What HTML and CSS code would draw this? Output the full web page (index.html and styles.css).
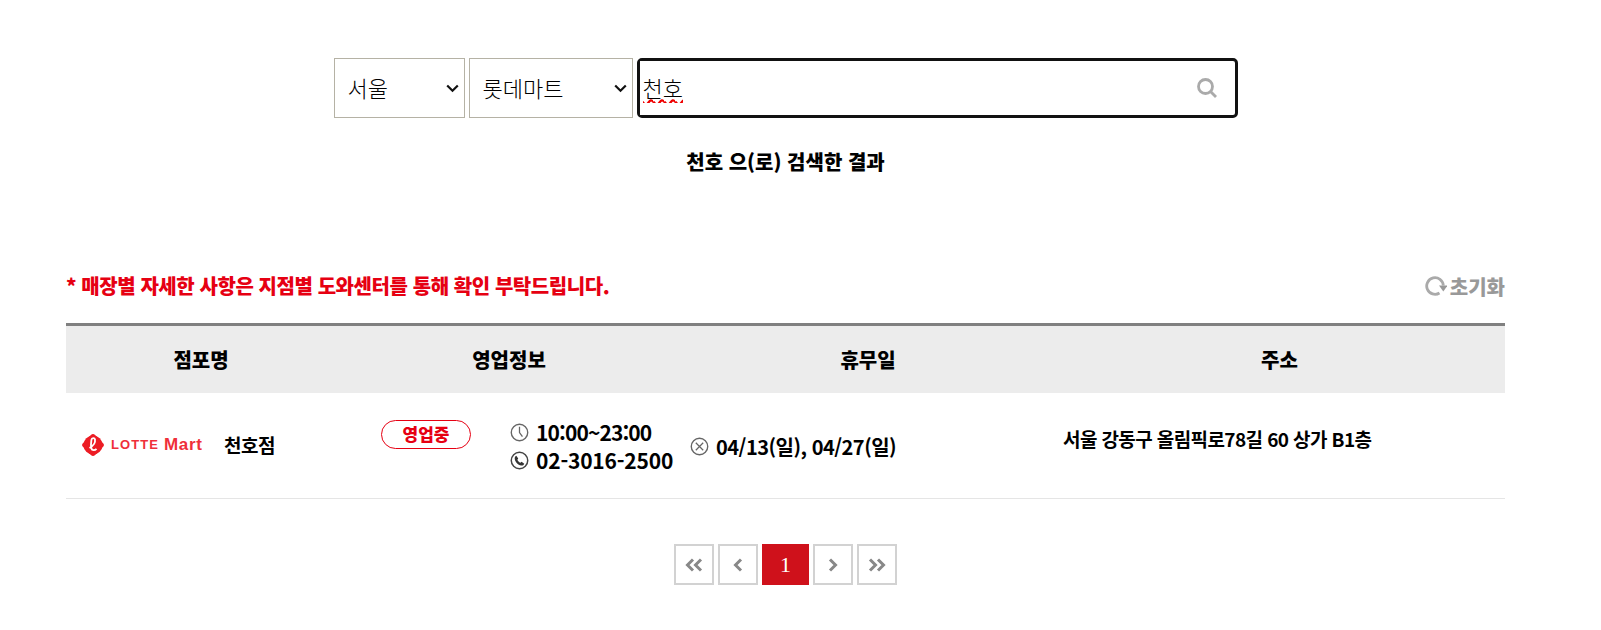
FILE: index.html
```html
<!DOCTYPE html>
<html lang="ko">
<head>
    <meta charset="UTF-8">
    <meta name="viewport" content="width=device-width, initial-scale=1.0">
    <title>매장찾기</title>
    <link rel="stylesheet" href="styles.css">
</head>
<body>
    <div class="page-wrap">
        <div class="search-bar">
            <div class="select-wrap city">
                <select class="search-select">
                    <option>서울</option>
                </select>
                <svg class="select-arrow" viewBox="0 0 13 9"><path d="M1.200 1.500 6.500 6.800l5.300-5.300" fill="none" stroke="#111" stroke-width="2.200"/></svg>
            </div>
            <div class="select-wrap brand">
                <select class="search-select">
                    <option>롯데마트</option>
                </select>
                <svg class="select-arrow" viewBox="0 0 13 9"><path d="M1.200 1.500 6.500 6.800l5.300-5.300" fill="none" stroke="#111" stroke-width="2.200"/></svg>
            </div>
            <div class="search-box">
                <input class="search-input" type="text" value="천호">
                <svg class="search-icon" viewBox="0 0 20 20"><circle cx="8.500" cy="8.500" r="7" fill="none" stroke="#aaa" stroke-width="2.800"/><path d="m13.500 13.500 5.500 5.500" stroke="#aaa" stroke-width="2.800"/></svg>
            </div>
        </div>
        <p class="search-result">천호 으(로) 검색한 결과</p>

        <div class="store-top">
            <p class="store-notice">* 매장별 자세한 사항은 지점별 도와센터를 통해 확인 부탁드립니다.</p>
            <div class="reset-btn">
                <svg class="reset-icon" viewBox="0 0 22 20"><path d="M14.500 17A8.300 8.300 0 1 1 18.300 9.500" fill="none" stroke="#aaa" stroke-width="2.800"/><path d="M14 9.500h8.500l-4.200 6z" fill="#999"/></svg>
                <span>초기화</span>
            </div>
        </div>

        <div class="store-table">
            <div class="store-head">
                <div>점포명</div>
                <div>영업정보</div>
                <div>휴무일</div>
                <div>주소</div>
            </div>
            <div class="store-row">
                <div class="cell-name">
                    <div class="logo">
                        <svg class="logo-mark" viewBox="0 0 24 24">
                            <circle cx="12" cy="12" r="9.500" fill="#ec1c24"/>
                            <rect x="3.500" y="3.500" width="17" height="17" rx="3" transform="rotate(45 12 12)" fill="#ec1c24"/>
                            <path d="M8.500 15c3.500-2 6-5.500 5.500-8.500-.4-2-3.200-2-3.600.5-.5 3-.6 6 0 8.500.5 2 3.600 2 5.100.3" fill="none" stroke="#fff" stroke-width="1.800"/>
                        </svg>
                        <span class="logo-lotte">LOTTE</span>
                        <span class="logo-mart">Mart</span>
                    </div>
                    <span class="store-name">천호점</span>
                </div>
                <div class="cell-info">
                    <span class="status">영업중</span>
                    <ul class="info-list">
                        <li class="info-time">
                            <svg class="info-icon" viewBox="0 0 18 18"><circle cx="9" cy="9" r="7.800" fill="none" stroke="#666" stroke-width="1.300"/><path d="M9 3.500V9l2.800 4" fill="none" stroke="#666" stroke-width="1.200"/></svg>
                            10:00~23:00
                        </li>
                        <li class="info-tel">
                            <svg class="info-icon" viewBox="0 0 18 18"><circle cx="9" cy="9" r="7.800" fill="none" stroke="#444" stroke-width="1.400"/><path d="M6 4.500 7.800 7 7 8.300c.6 1.200 1.500 2.200 2.800 2.800l1.200-.9 2.500 1.800c-.5 1.400-1.800 2-3 1.700C7.500 13 5 10.500 4.500 7.500 4.300 6.200 4.800 5 6 4.500z" fill="#333"/></svg>
                            02-3016-2500
                        </li>
                    </ul>
                </div>
                <div class="cell-holiday">
                    <svg class="info-icon" viewBox="0 0 18 18"><circle cx="9" cy="9" r="7.800" fill="none" stroke="#666" stroke-width="1.300"/><path d="m5.500 5.500 7 7m0-7-7 7" fill="none" stroke="#666" stroke-width="1.200"/></svg>
                    04/13(일), 04/27(일)
                </div>
                <div class="cell-addr">서울 강동구 올림픽로78길 60 상가 B1층</div>
            </div>
        </div>

        <div class="paging">
            <a class="page-btn"><svg viewBox="0 0 20 14"><path d="M9 1.500 3.500 7 9 12.500M17 1.500 11.500 7l5.500 5.500" fill="none" stroke="#888" stroke-width="3"/></svg></a>
            <a class="page-btn"><svg viewBox="0 0 20 14"><path d="M13 1.500 7.500 7l5.500 5.500" fill="none" stroke="#888" stroke-width="3"/></svg></a>
            <a class="page-btn current">1</a>
            <a class="page-btn"><svg viewBox="0 0 20 14"><path d="M7 1.500 12.500 7 7 12.500" fill="none" stroke="#888" stroke-width="3"/></svg></a>
            <a class="page-btn"><svg viewBox="0 0 20 14"><path d="M3 1.500 8.500 7 3 12.500M11 1.500 16.500 7 11 12.500" fill="none" stroke="#888" stroke-width="3"/></svg></a>
        </div>
    </div>
</body>
</html>
```

FILE: styles.css
```css
* {
    box-sizing: border-box;
}

body {
    margin: 0;
    background: #fff;
    color: #000;
    font-family: "Noto Sans CJK KR", "Noto Sans", sans-serif;
}

p {
    margin: 0;
}

.page-wrap {
    margin: 0 96px 0 66px;
}

.search-bar {
    display: flex;
    justify-content: center;
    gap: 4px;
    padding-top: 58px;
}

.select-wrap {
    position: relative;
    height: 60px;
}

.select-wrap.city {
    width: 131px;
}

.select-wrap.brand {
    width: 164px;
}

.search-select {
    appearance: none;
    width: 100%;
    height: 100%;
    padding: 0 0 3px 13px;
    border: 1px solid #b5b2a5;
    border-radius: 0;
    background: #fff;
    color: #000;
    font-family: inherit;
    font-size: 22px;
    font-weight: 300;
}

.select-arrow {
    position: absolute;
    top: 26px;
    right: 6px;
    width: 13px;
    height: 9px;
}

.search-box {
    display: flex;
    align-items: center;
    width: 601px;
    height: 60px;
    padding-right: 18px;
    border: 3px solid #111;
    border-radius: 5px;
}

.search-input {
    flex: 1;
    min-width: 0;
    height: 100%;
    padding: 0 0 3px 3px;
    border: none;
    outline: none;
    font-family: inherit;
    font-size: 22px;
    font-weight: 300;
    text-decoration: underline wavy #e00;
}

.search-icon {
    width: 20px;
    height: 20px;
}

.search-result {
    margin-top: 30px;
    font-size: 20px;
    line-height: 27px;
    font-weight: 900;
    text-align: center;
}

.store-top {
    display: flex;
    justify-content: space-between;
    align-items: center;
    margin-top: 93px;
    height: 36px;
}

.store-notice {
    padding-bottom: 2px;
    color: #e60012;
    font-size: 20px;
    font-weight: 900;
    letter-spacing: -0.43px;
}

.reset-btn {
    display: flex;
    align-items: center;
    gap: 3px;
    color: #999;
    font-size: 20px;
    font-weight: 900;
}

.reset-icon {
    width: 22px;
    height: 20px;
}

.store-table {
    margin-top: 19px;
    border-top: 3px solid #808080;
}

.store-head,
.store-row {
    display: grid;
    grid-template-columns: 270px 346px 372px 451px;
}

.store-head {
    height: 67px;
    align-items: center;
    background: #ececec;
    font-size: 20px;
    font-weight: 900;
    text-align: center;
}

.store-row {
    height: 106px;
    border-bottom: 1px solid #e5e5e5;
    font-weight: 700;
}

.cell-name {
    display: flex;
    align-items: center;
    padding: 0 0 2px 15px;
}

.logo {
    display: flex;
    align-items: center;
    width: 143px;
    color: #ef2f3a;
    font-family: "Liberation Sans", sans-serif;
    font-weight: 700;
}

.logo-mark {
    width: 24px;
    height: 24px;
    margin-right: 6px;
}

.logo-lotte {
    font-size: 13px;
    letter-spacing: 1.1px;
    margin-right: 5px;
}

.logo-mart {
    font-size: 17px;
    letter-spacing: 0.6px;
}

.store-name {
    font-size: 19px;
    letter-spacing: -0.5px;
}

.cell-info {
    display: flex;
    padding: 27px 0 0 45px;
}

.status {
    width: 90px;
    height: 29px;
    border: 1px solid #e60012;
    border-radius: 15px;
    color: #e60012;
    font-size: 17px;
    font-weight: 900;
    line-height: 25px;
    text-align: center;
}

.info-list {
    margin: -2px 0 0 39px;
    padding: 0;
    list-style: none;
    white-space: nowrap;
}

.info-list li {
    display: flex;
    align-items: center;
    gap: 7px;
    height: 28px;
    font-size: 21px;
}

.info-list .info-time {
    letter-spacing: -0.9px;
}

.info-list .info-tel {
    letter-spacing: -0.2px;
}

.info-icon {
    width: 19px;
    height: 19px;
    flex: none;
}

.cell-holiday {
    display: flex;
    align-items: center;
    gap: 7px;
    padding: 1px 0 0 8px;
    white-space: nowrap;
    font-size: 20px;
    letter-spacing: -0.5px;
}

.cell-addr {
    padding: 32px 0 0 9px;
    font-size: 19px;
    letter-spacing: -0.6px;
}

.paging {
    display: flex;
    justify-content: center;
    gap: 4px;
    margin-top: 45px;
}

.page-btn {
    display: flex;
    align-items: center;
    justify-content: center;
    width: 40px;
    height: 41px;
    border: 2px solid #d2d2d2;
}

.page-btn svg {
    width: 20px;
    height: 14px;
}

.page-btn.current {
    width: 47px;
    border-color: #cf111b;
    background: #cf111b;
    color: #fff;
    font-family: "Liberation Serif", serif;
    font-size: 22px;
}
```
